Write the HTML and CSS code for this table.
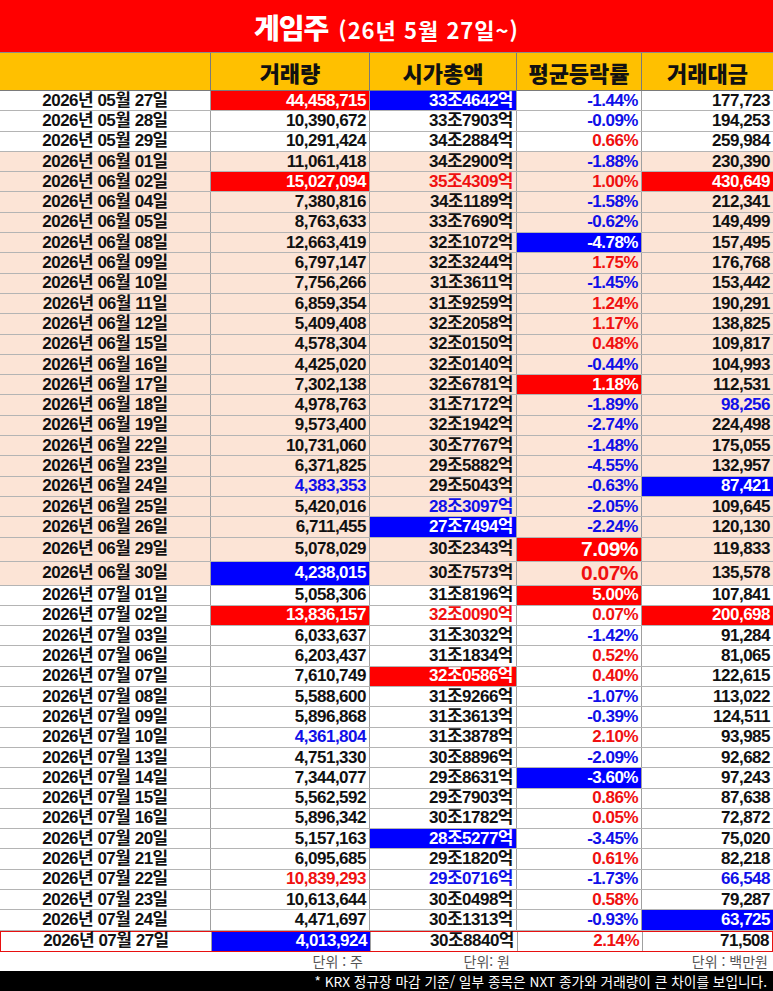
FILE: index.html
```html
<!DOCTYPE html>
<html lang="ko">
<head>
<meta charset="utf-8">
<title>게임주</title>
<link rel="stylesheet" href="styles.css">
</head>
<body>
<div class="sheet">
  <div class="title"><span class="title-main">게임주</span><span class="title-sub">(26년 5월 27일~)</span></div>
  <div class="row head">
    <div class="c"></div><div class="c">거래량</div><div class="c">시가총액</div><div class="c">평균등락률</div><div class="c">거래대금</div>
  </div>
  <div class="row"><div class="c d">2026년 05월 27일</div><div class="c r">44,458,715</div><div class="c b">33조4642억</div><div class="c tb">-1.44%</div><div class="c">177,723</div></div>
  <div class="row"><div class="c d">2026년 05월 28일</div><div class="c">10,390,672</div><div class="c">33조7903억</div><div class="c tb">-0.09%</div><div class="c">194,253</div></div>
  <div class="row"><div class="c d">2026년 05월 29일</div><div class="c">10,291,424</div><div class="c">34조2884억</div><div class="c tr">0.66%</div><div class="c">259,984</div></div>
  <div class="row peach"><div class="c d">2026년 06월 01일</div><div class="c">11,061,418</div><div class="c">34조2900억</div><div class="c tb">-1.88%</div><div class="c">230,390</div></div>
  <div class="row peach"><div class="c d">2026년 06월 02일</div><div class="c r">15,027,094</div><div class="c tr">35조4309억</div><div class="c tr">1.00%</div><div class="c r">430,649</div></div>
  <div class="row peach"><div class="c d">2026년 06월 04일</div><div class="c">7,380,816</div><div class="c">34조1189억</div><div class="c tb">-1.58%</div><div class="c">212,341</div></div>
  <div class="row peach"><div class="c d">2026년 06월 05일</div><div class="c">8,763,633</div><div class="c">33조7690억</div><div class="c tb">-0.62%</div><div class="c">149,499</div></div>
  <div class="row peach"><div class="c d">2026년 06월 08일</div><div class="c">12,663,419</div><div class="c">32조1072억</div><div class="c b">-4.78%</div><div class="c">157,495</div></div>
  <div class="row peach"><div class="c d">2026년 06월 09일</div><div class="c">6,797,147</div><div class="c">32조3244억</div><div class="c tr">1.75%</div><div class="c">176,768</div></div>
  <div class="row peach"><div class="c d">2026년 06월 10일</div><div class="c">7,756,266</div><div class="c">31조3611억</div><div class="c tb">-1.45%</div><div class="c">153,442</div></div>
  <div class="row peach"><div class="c d">2026년 06월 11일</div><div class="c">6,859,354</div><div class="c">31조9259억</div><div class="c tr">1.24%</div><div class="c">190,291</div></div>
  <div class="row peach"><div class="c d">2026년 06월 12일</div><div class="c">5,409,408</div><div class="c">32조2058억</div><div class="c tr">1.17%</div><div class="c">138,825</div></div>
  <div class="row peach"><div class="c d">2026년 06월 15일</div><div class="c">4,578,304</div><div class="c">32조0150억</div><div class="c tr">0.48%</div><div class="c">109,817</div></div>
  <div class="row peach"><div class="c d">2026년 06월 16일</div><div class="c">4,425,020</div><div class="c">32조0140억</div><div class="c tb">-0.44%</div><div class="c">104,993</div></div>
  <div class="row peach"><div class="c d">2026년 06월 17일</div><div class="c">7,302,138</div><div class="c">32조6781억</div><div class="c r">1.18%</div><div class="c">112,531</div></div>
  <div class="row peach"><div class="c d">2026년 06월 18일</div><div class="c">4,978,763</div><div class="c">31조7172억</div><div class="c tb">-1.89%</div><div class="c tb">98,256</div></div>
  <div class="row peach"><div class="c d">2026년 06월 19일</div><div class="c">9,573,400</div><div class="c">32조1942억</div><div class="c tb">-2.74%</div><div class="c">224,498</div></div>
  <div class="row peach"><div class="c d">2026년 06월 22일</div><div class="c">10,731,060</div><div class="c">30조7767억</div><div class="c tb">-1.48%</div><div class="c">175,055</div></div>
  <div class="row peach"><div class="c d">2026년 06월 23일</div><div class="c">6,371,825</div><div class="c">29조5882억</div><div class="c tb">-4.55%</div><div class="c">132,957</div></div>
  <div class="row peach"><div class="c d">2026년 06월 24일</div><div class="c tb">4,383,353</div><div class="c">29조5043억</div><div class="c tb">-0.63%</div><div class="c b">87,421</div></div>
  <div class="row peach"><div class="c d">2026년 06월 25일</div><div class="c">5,420,016</div><div class="c tb">28조3097억</div><div class="c tb">-2.05%</div><div class="c">109,645</div></div>
  <div class="row peach"><div class="c d">2026년 06월 26일</div><div class="c">6,711,455</div><div class="c b">27조7494억</div><div class="c tb">-2.24%</div><div class="c">120,130</div></div>
  <div class="row peach tall"><div class="c d">2026년 06월 29일</div><div class="c">5,078,029</div><div class="c">30조2343억</div><div class="c r big">7.09%</div><div class="c">119,833</div></div>
  <div class="row peach tall"><div class="c d">2026년 06월 30일</div><div class="c b">4,238,015</div><div class="c">30조7573억</div><div class="c tr big">0.07%</div><div class="c">135,578</div></div>
  <div class="row"><div class="c d">2026년 07월 01일</div><div class="c">5,058,306</div><div class="c">31조8196억</div><div class="c r">5.00%</div><div class="c">107,841</div></div>
  <div class="row"><div class="c d">2026년 07월 02일</div><div class="c r">13,836,157</div><div class="c tr">32조0090억</div><div class="c tr">0.07%</div><div class="c r">200,698</div></div>
  <div class="row"><div class="c d">2026년 07월 03일</div><div class="c">6,033,637</div><div class="c">31조3032억</div><div class="c tb">-1.42%</div><div class="c">91,284</div></div>
  <div class="row"><div class="c d">2026년 07월 06일</div><div class="c">6,203,437</div><div class="c">31조1834억</div><div class="c tr">0.52%</div><div class="c">81,065</div></div>
  <div class="row"><div class="c d">2026년 07월 07일</div><div class="c">7,610,749</div><div class="c r">32조0586억</div><div class="c tr">0.40%</div><div class="c">122,615</div></div>
  <div class="row"><div class="c d">2026년 07월 08일</div><div class="c">5,588,600</div><div class="c">31조9266억</div><div class="c tb">-1.07%</div><div class="c">113,022</div></div>
  <div class="row"><div class="c d">2026년 07월 09일</div><div class="c">5,896,868</div><div class="c">31조3613억</div><div class="c tb">-0.39%</div><div class="c">124,511</div></div>
  <div class="row"><div class="c d">2026년 07월 10일</div><div class="c tb">4,361,804</div><div class="c">31조3878억</div><div class="c tr">2.10%</div><div class="c">93,985</div></div>
  <div class="row"><div class="c d">2026년 07월 13일</div><div class="c">4,751,330</div><div class="c">30조8896억</div><div class="c tb">-2.09%</div><div class="c">92,682</div></div>
  <div class="row"><div class="c d">2026년 07월 14일</div><div class="c">7,344,077</div><div class="c">29조8631억</div><div class="c b">-3.60%</div><div class="c">97,243</div></div>
  <div class="row"><div class="c d">2026년 07월 15일</div><div class="c">5,562,592</div><div class="c">29조7903억</div><div class="c tr">0.86%</div><div class="c">87,638</div></div>
  <div class="row"><div class="c d">2026년 07월 16일</div><div class="c">5,896,342</div><div class="c">30조1782억</div><div class="c tr">0.05%</div><div class="c">72,872</div></div>
  <div class="row"><div class="c d">2026년 07월 20일</div><div class="c">5,157,163</div><div class="c b">28조5277억</div><div class="c tb">-3.45%</div><div class="c">75,020</div></div>
  <div class="row"><div class="c d">2026년 07월 21일</div><div class="c">6,095,685</div><div class="c">29조1820억</div><div class="c tr">0.61%</div><div class="c">82,218</div></div>
  <div class="row"><div class="c d">2026년 07월 22일</div><div class="c tr">10,839,293</div><div class="c tb">29조0716억</div><div class="c tb">-1.73%</div><div class="c tb">66,548</div></div>
  <div class="row"><div class="c d">2026년 07월 23일</div><div class="c">10,613,644</div><div class="c">30조0498억</div><div class="c tr">0.58%</div><div class="c">79,287</div></div>
  <div class="row"><div class="c d">2026년 07월 24일</div><div class="c">4,471,697</div><div class="c">30조1313억</div><div class="c tb">-0.93%</div><div class="c b">63,725</div></div>
  <div class="row last"><div class="c d">2026년 07월 27일</div><div class="c b">4,013,924</div><div class="c">30조8840억</div><div class="c tr">2.14%</div><div class="c">71,508</div></div>
  <div class="row units"><div class="c"></div><div class="c">단위 : 주</div><div class="c">단위: 원</div><div class="c"></div><div class="c">단위 : 백만원</div></div>
  <div class="note">* KRX 정규장 마감 기준/ 일부 종목은 NXT 종가와 거래량이 큰 차이를 보입니다.</div>
</div>
</body>
</html>
```
FILE: styles.css
```css
html, body {
  margin: 0;
  padding: 0;
  background: #ffffff;
}
.sheet {
  width: 773px;
  display: flex;
  flex-direction: column;
}
.title {
  height: 52px;
  background: #ff0000;
  color: #ffffff;
  display: flex;
  align-items: center;
  justify-content: center;
  gap: 10px;
  font-family: "Noto Sans CJK KR", sans-serif;
  font-weight: 900;
  box-sizing: border-box;
  padding-top: 2px;
  line-height: 30px;
}
.title-main {
  font-size: 28px;
  letter-spacing: -1px;
}
.title-sub {
  font-size: 22px;
  font-weight: 700;
  letter-spacing: 1px;
  padding-top: 3px;
}
.row {
  display: grid;
  grid-template-columns: 211px 159px 147px 125px 1fr;
  height: 20.3px;
  box-sizing: border-box;
  border-bottom: 1px solid #b4b4b4;
  font-family: "Liberation Sans", "Noto Sans CJK KR", sans-serif;
  font-weight: 700;
  font-size: 17px;
  line-height: 18px;
  letter-spacing: -0.5px;
  color: #111111;
}
.c {
  border-right: 1px solid #a0a0a0;
  padding-right: 3px;
  display: flex;
  align-items: center;
  justify-content: flex-end;
  white-space: nowrap;
}
.c:last-child {
  border-right: none;
}
.d {
  justify-content: center;
  padding-right: 0;
}
.head {
  height: 39px;
  background: #ffc000;
  border-top: 1px solid #8c8c8c;
  border-bottom: 1px solid #7a7a7a;
  font-family: "Noto Sans CJK KR", sans-serif;
  font-weight: 900;
  font-size: 22px;
  line-height: 26px;
  letter-spacing: 0;
}
.head .c {
  justify-content: center;
  padding-right: 0;
  border-right-color: #7a7a7a;
}
.peach {
  background: #fce4d6;
}
.tall {
  height: 24px;
}
.r {
  background: #ff0000;
  color: #ffffff;
}
.b {
  background: #0000ff;
  color: #ffffff;
}
.tr {
  color: #f01010;
}
.tb {
  color: #1010e8;
}
.big {
  font-size: 21px;
  line-height: 22px;
}
.last {
  border: 1px solid #e81010;
  height: 21px;
}
.units {
  height: 19px;
  border-bottom: none;
  font-family: "Noto Sans CJK KR", sans-serif;
  font-weight: 400;
  font-size: 14px;
  line-height: 16px;
  letter-spacing: 0;
  color: #555555;
}
.units .c {
  border-right: none;
  padding-right: 7px;
}
.units .c:nth-child(5) {
  padding-right: 5px;
}
.note {
  height: 21px;
  background: #000000;
  color: #ffffff;
  font-family: "Noto Sans CJK KR", sans-serif;
  font-size: 13.7px;
  line-height: 16px;
  display: flex;
  align-items: center;
  justify-content: flex-end;
  padding-right: 6px;
}
```
